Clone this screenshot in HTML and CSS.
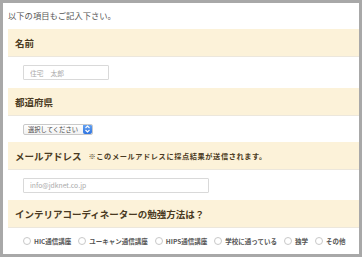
FILE: index.html
```html
<!DOCTYPE html>
<html lang="ja">
<head>
    <meta charset="UTF-8">
    <meta name="viewport" content="width=device-width, initial-scale=1.0">
    <title>ご記入項目</title>
    <link rel="stylesheet" href="styles.css">
</head>
<body>

    <div class="frame">
        <p class="intro">以下の項目もご記入下さい。</p>

        <div class="form-table">
            <div class="head">名前</div>
            <div class="field field-name">
                <input class="text-input short" type="text" placeholder="住宅　太郎">
            </div>

            <div class="head">都道府県</div>
            <div class="field field-pref">
                <div class="select-box">
                    <span class="select-label">選択してください</span>
                    <span class="select-arrows">
                        <svg viewBox="0 0 9 10" width="9" height="10">
                            <path d="M2.5 4 L4.5 2 L6.5 4" fill="none" stroke="#fff" stroke-width="1.1"/>
                            <path d="M2.5 6 L4.5 8 L6.5 6" fill="none" stroke="#fff" stroke-width="1.1"/>
                        </svg>
                    </span>
                </div>
            </div>

            <div class="head">メールアドレス <span class="note">※このメールアドレスに採点結果が送信されます。</span></div>
            <div class="field field-mail">
                <input class="text-input long" type="text" placeholder="info@jdknet.co.jp">
            </div>

            <div class="head">インテリアコーディネーターの勉強方法は？</div>
            <div class="field field-radio">
                <label class="radio"><span class="dot"></span>HIC通信講座</label>
                <label class="radio"><span class="dot"></span>ユーキャン通信講座</label>
                <label class="radio"><span class="dot"></span>HIPS通信講座</label>
                <label class="radio"><span class="dot"></span>学校に通っている</label>
                <label class="radio"><span class="dot"></span>独学</label>
                <label class="radio"><span class="dot"></span>その他</label>
            </div>
        </div>
    </div>

</body>
</html>
```

FILE: styles.css
```css
/* --- Base --- */
:root {
    --frame-gray: #a8a8a8;
    --head-bg: #fcf2d9;
    --head-text: #4a3a22;
    --line: #ece7dc;
    --input-border: #d9d9d9;
}

body, html {
    margin: 0;
    padding: 0;
    background: #fff;
    font-family: "Noto Sans CJK JP", "Noto Sans", sans-serif;
}

/* --- Outer frame --- */
.frame {
    width: 362px;
    height: 257px;
    box-sizing: border-box;
    border: 3px solid var(--frame-gray);
    padding-left: 5px;
    overflow: hidden;
}

.intro {
    margin: 0;
    padding: 6px 0 8px 0;
    font-size: 8.3px;
    line-height: 12px;
    color: #555;
}

/* --- Header rows --- */
.head {
    height: 27px;
    display: flex;
    align-items: center;
    padding-left: 7px;
    background-color: var(--head-bg);
    color: var(--head-text);
    font-size: 9.5px;
    font-weight: 700;
    white-space: nowrap;
}

.head .note {
    font-family: "Noto Sans CJK JP", sans-serif;
    font-variant-emoji: text;
    font-size: 7.2px;
    margin-left: 7px;
    letter-spacing: 0.6px;
    color: var(--head-text);
}

/* --- Field rows --- */
.field {
    display: flex;
    align-items: center;
    padding-left: 15px;
    border-top: 1px solid var(--line);
    box-sizing: border-box;
}

.field-name { height: 32px; }
.field-pref { height: 27px; }
.field-mail { height: 31px; }
.field-radio { height: 26px; gap: 7px; padding-left: 15px; }

.text-input {
    height: 15px;
    box-sizing: border-box;
    border: 1px solid var(--input-border);
    border-radius: 1px;
    padding: 0 6px;
    font-family: inherit;
    font-size: 6.8px;
    outline: none;
}
.text-input::placeholder {
    color: #aaa;
}
.text-input.short { width: 86px; }
.text-input.long { width: 186px; }

/* --- Select --- */
.select-box {
    display: flex;
    align-items: center;
    height: 11px;
    width: 70px;
    box-sizing: border-box;
    border: 1px solid #c9c9c9;
    border-radius: 2px;
    overflow: hidden;
    background: linear-gradient(#fff, #f1f1f1);
}

.select-label {
    flex: 1;
    padding-left: 4px;
    font-size: 6.3px;
    color: #444;
    white-space: nowrap;
}

.select-arrows {
    display: flex;
    width: 9px;
    height: 10px;
    background: linear-gradient(#6aa6f3, #2f74e0);
    border-radius: 2px;
}

/* --- Radios --- */
.radio {
    display: flex;
    align-items: center;
    gap: 3px;
    font-size: 6.5px;
    font-weight: 700;
    color: #555;
    white-space: nowrap;
}

.radio .dot {
    width: 6px;
    height: 6px;
    border: 1px solid #c8c8c8;
    border-radius: 50%;
    background: #fff;
}
```
